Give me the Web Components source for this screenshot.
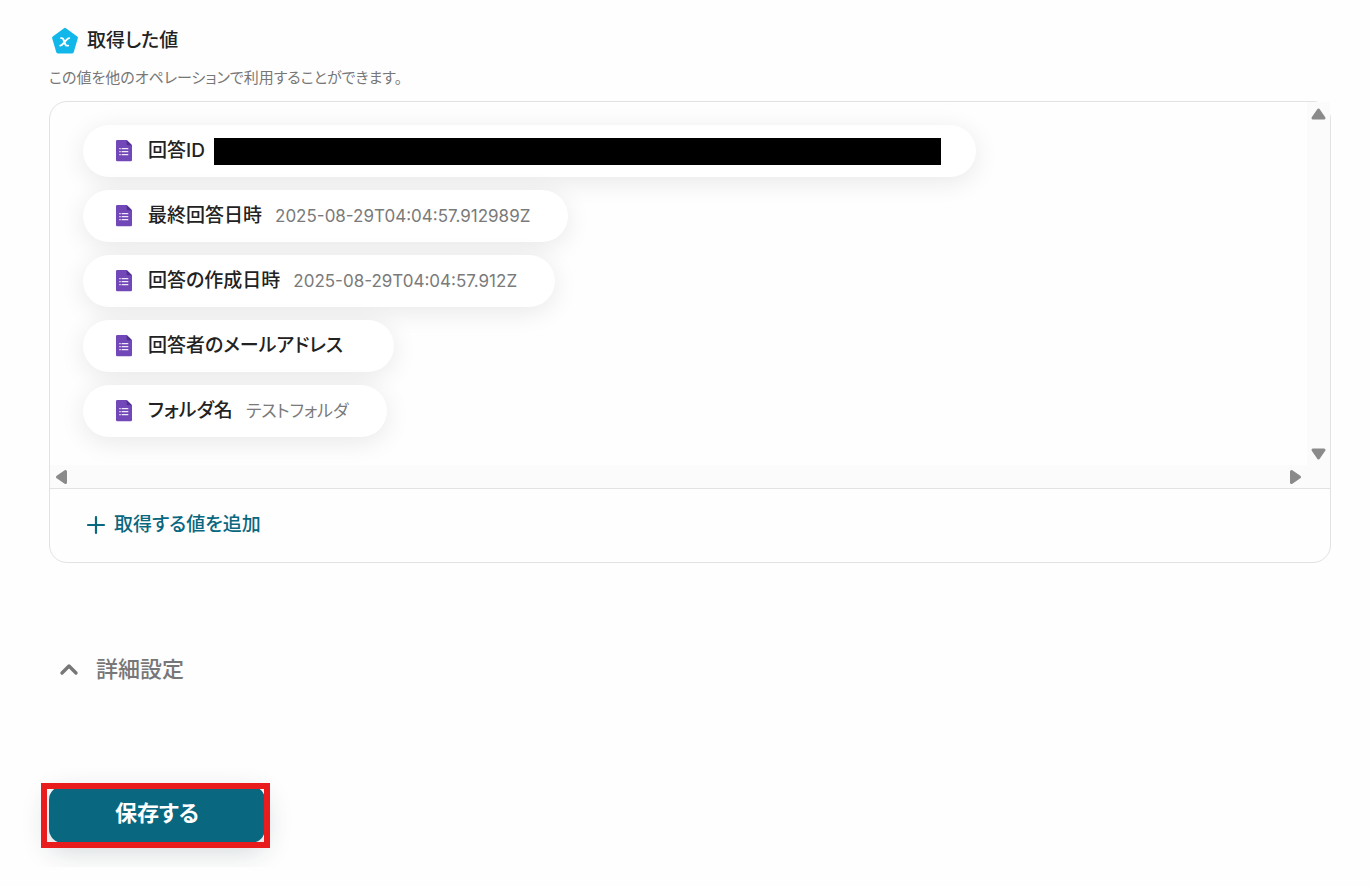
<!DOCTYPE html>
<html lang="ja">
<head>
<meta charset="utf-8">
<meta name="viewport" content="width=device-width, initial-scale=1">
<title>取得した値</title>
<style>
  body {
    margin: 0;
    background: #fefefe;
    color: #222;
    font-family: Inter, "Noto Sans CJK JP", sans-serif;
    font-feature-settings: "palt";
  }
</style>
</head>
<body>
<operation-page>
  <section-heading slot="heading">
    取得した値
    <span slot="note">この値を他のオペレーションで利用することができます。</span>
  </section-heading>
  <value-panel slot="panel">
    <value-chip redacted>回答ID</value-chip>
    <value-chip>最終回答日時<span slot="value">2025-08-29T04:04:57.912989Z</span></value-chip>
    <value-chip>回答の作成日時<span slot="value">2025-08-29T04:04:57.912Z</span></value-chip>
    <value-chip>回答者のメールアドレス</value-chip>
    <value-chip>フォルダ名<span slot="value">テストフォルダ</span></value-chip>
    <add-button slot="footer">取得する値を追加</add-button>
  </value-panel>
  <detail-toggle slot="details">詳細設定</detail-toggle>
  <save-button slot="actions">保存する</save-button>
</operation-page>

<script>
class BaseElement extends HTMLElement {
  constructor() {
    super();
    this.attachShadow({ mode: "open" }).innerHTML = this.constructor.markup;
  }
}

customElements.define("operation-page", class extends BaseElement {
  static markup = `
    <style>
      :host { display: block; padding: 25px 38px 24px 49px; }
      main { display: flex; flex-direction: column; align-items: stretch; }
      .details { margin-top: 90px; }
      .actions { margin-top: 101px; }
    </style>
    <main>
      <slot name="heading"></slot>
      <slot name="panel"></slot>
      <div class="details"><slot name="details"></slot></div>
      <div class="actions"><slot name="actions"></slot></div>
    </main>`;
});

customElements.define("section-heading", class extends BaseElement {
  static markup = `
    <style>
      :host { display: block; margin-bottom: 11px; }
      h2 { display: flex; align-items: center; gap: 8px; margin: 0 0 8px 2px;
           font-size: 19px; line-height: 32px; font-weight: 500; }
      p { margin: 0; font-size: 15px; line-height: 25px; color: #777; }
    </style>
    <h2>
      <svg width="28" height="28" viewBox="0 0 28 28" aria-hidden="true">
        <path d="M14 2.5 25.3 10.8 21.2 24.8H6.8L2.7 10.8Z" fill="#12b7ea" stroke="#12b7ea" stroke-width="3.2" stroke-linejoin="round"/>
        <path d="M10 11.1h.8c1 0 1.3.4 1.6 1.2l1.9 5c.3.8.7 1.3 1.6 1.3h1.3M18.2 11.1c-1.5 0-2.4 1.3-4.5 3.8s-3 3.7-4.5 3.7" fill="none" stroke="#fff" stroke-width="1.9" stroke-linecap="round"/>
      </svg>
      <span><slot></slot></span>
    </h2>
    <p><slot name="note"></slot></p>`;
});

customElements.define("value-panel", class extends BaseElement {
  static markup = `
    <style>
      :host { display: block; border: 1px solid #e2e2e2; border-radius: 18px; }
      .scroller { display: grid; grid-template-columns: minmax(0, 1fr) 23px; grid-template-rows: auto 23px; }
      .list { display: flex; flex-direction: column; align-items: flex-start; gap: 13px;
              padding: 23px 33px 28px; overflow: hidden; border-top-left-radius: 17px; }
      .bar { display: flex; justify-content: space-between; align-items: center; background: #fbfbfb; }
      .vertical { flex-direction: column; padding: 4px 0 3px; }
      .horizontal { padding: 0 3px; }
      .corner { background: #fbfbfb; }
      button { display: flex; align-items: center; justify-content: center; width: 17px; height: 17px;
               padding: 0; border: 0; background: none; color: #8a8a8a; }
      svg { fill: currentColor; stroke: currentColor; stroke-width: 3; stroke-linejoin: round; }
      footer { border-top: 1px solid #e2e2e2; padding: 15px 36px 17px; }
    </style>
    <div class="scroller">
      <div class="list"><slot></slot></div>
      <div class="bar vertical">
        <button type="button" aria-label="上へ"><svg width="17" height="17"><path d="M8.5 4 14 12H3Z"/></svg></button>
        <button type="button" aria-label="下へ"><svg width="17" height="17"><path d="M3 5H14L8.5 13Z"/></svg></button>
      </div>
      <div class="bar horizontal">
        <button type="button" aria-label="左へ"><svg width="17" height="17"><path d="M12.5 3.5V14.5L4.5 9Z"/></svg></button>
        <button type="button" aria-label="右へ"><svg width="17" height="17"><path d="M4.5 3.5V14.5L12.5 9Z"/></svg></button>
      </div>
      <div class="corner"></div>
    </div>
    <footer><slot name="footer"></slot></footer>`;
});

customElements.define("value-chip", class extends BaseElement {
  static markup = `
    <style>
      :host { display: flex; align-items: center; box-sizing: border-box; height: 52px; max-width: 100%;
              padding: 0 38px 0 33px; border-radius: 26px; background: #fff; white-space: nowrap;
              box-shadow: 0 5px 26px rgba(0, 0, 0, .09); }
      :host([redacted]) { padding-right: 35px; }
      svg { flex: none; margin-right: 16px; }
      .label { font-size: 19px; line-height: 28px; font-weight: 500; }
      .value { margin-left: 13px; font-size: 17px; line-height: 24px; color: #7a7a7a; }
      .mask { display: none; width: 727px; height: 27px; margin-left: 9px; background: #000; }
      :host([redacted]) .mask { display: block; }
      :host([redacted]) .value { display: none; }
    </style>
    <svg width="16" height="22" viewBox="0 0 16 22" aria-hidden="true">
      <path d="M1.2 0H10.7L16 5.2V20a1.2 1.2 0 0 1-1.2 1.2H1.2A1.2 1.2 0 0 1 0 20V1.2A1.2 1.2 0 0 1 1.2 0Z" fill="#7248b9"/>
      <path d="M10.7 0 16 5.2H11.7a1 1 0 0 1-1-1Z" fill="#4f2f91"/>
      <path d="M5.6 8.6h6.7M5.6 11.6h6.7M5.6 14.6h6.7M3.3 8.6h1.4M3.3 11.6h1.4M3.3 14.6h1.4" stroke="#eee8f7" stroke-width="1.3"/>
    </svg>
    <span class="label"><slot></slot></span>
    <span class="value"><slot name="value"></slot></span>
    <span class="mask"></span>`;
});

customElements.define("add-button", class extends BaseElement {
  static markup = `
    <style>
      :host { display: block; }
      button { display: flex; align-items: center; gap: 8px; height: 41px; padding: 0; border: 0; background: none;
               color: #0a6780; font: inherit; font-feature-settings: inherit;
               font-size: 19px; line-height: 28px; font-weight: 500; }
    </style>
    <button type="button">
      <svg width="20" height="20" viewBox="0 0 20 20" aria-hidden="true">
        <path d="M10 2v16M2 10h16" stroke="currentColor" stroke-width="2.2" stroke-linecap="round"/>
      </svg>
      <span><slot></slot></span>
    </button>`;
});

customElements.define("detail-toggle", class extends BaseElement {
  static markup = `
    <style>
      :host { display: block; padding-left: 10px; }
      button { display: flex; align-items: center; gap: 17px; padding: 0; border: 0; background: none;
               color: #777; font: inherit; font-feature-settings: inherit;
               font-size: 22px; line-height: 32px; font-weight: 500; }
    </style>
    <button type="button" aria-expanded="false">
      <svg width="20" height="20" viewBox="0 0 20 20" aria-hidden="true">
        <path d="M3 14 10 7 17 14" fill="none" stroke="currentColor" stroke-width="3.4" stroke-linecap="round" stroke-linejoin="round"/>
      </svg>
      <span><slot></slot></span>
    </button>`;
});

customElements.define("save-button", class extends BaseElement {
  static markup = `
    <style>
      :host { display: block; width: fit-content; position: relative; }
      :host::after { content: ""; position: absolute; inset: -3px -5px -5px -8px;
                     border: 6px solid #e81c1c; pointer-events: none; }
      button { display: block; width: 216px; height: 57px; padding: 0 0 4px; border: 0; border-radius: 14px;
               background: #0a6780; color: #fff; font: inherit; font-feature-settings: inherit;
               font-size: 22px; line-height: 32px; font-weight: 700;
               box-shadow: 0 8px 28px rgba(10, 40, 50, .18); }
    </style>
    <button type="submit"><slot></slot></button>`;
});
</script>
</body>
</html>
